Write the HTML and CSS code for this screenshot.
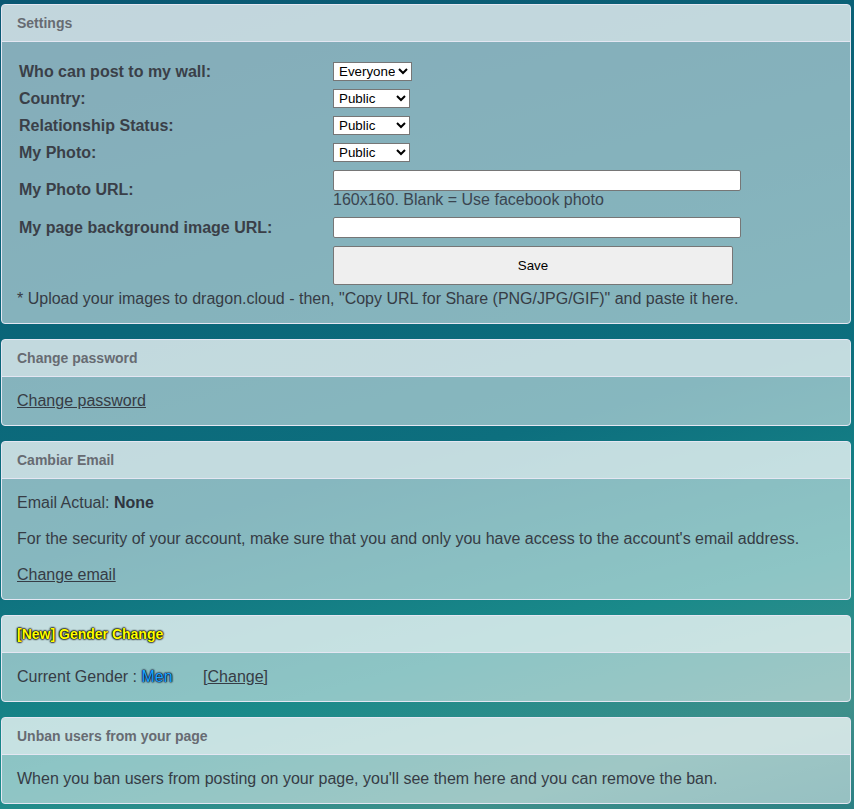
FILE: index.html
```html
<!DOCTYPE html>
<html lang="en">
<head>
    <meta charset="UTF-8">
    <meta name="viewport" content="width=device-width, initial-scale=1.0">
    <title>Settings</title>
    <link rel="stylesheet" href="styles.css">
</head>
<body>
    <div class="wrap">
        <div class="panel">
            <div class="panel-heading">Settings</div>
            <div class="panel-body">
                <table class="settings">
                    <tr>
                        <td class="label">Who can post to my wall:</td>
                        <td>
                            <select class="sel-wide">
                                <option>Everyone</option>
                                <option>Friends</option>
                                <option>Nobody</option>
                            </select>
                        </td>
                    </tr>
                    <tr>
                        <td class="label">Country:</td>
                        <td>
                            <select class="sel">
                                <option>Public</option>
                                <option>Private</option>
                            </select>
                        </td>
                    </tr>
                    <tr>
                        <td class="label">Relationship Status:</td>
                        <td>
                            <select class="sel">
                                <option>Public</option>
                                <option>Private</option>
                            </select>
                        </td>
                    </tr>
                    <tr>
                        <td class="label">My Photo:</td>
                        <td>
                            <select class="sel">
                                <option>Public</option>
                                <option>Private</option>
                            </select>
                        </td>
                    </tr>
                    <tr>
                        <td class="label">My Photo URL:</td>
                        <td>
                            <input type="text" class="url">
                            <div class="hint">160x160. Blank = Use facebook photo</div>
                        </td>
                    </tr>
                    <tr>
                        <td class="label">My page background image URL:</td>
                        <td><input type="text" class="url"></td>
                    </tr>
                    <tr>
                        <td></td>
                        <td><button class="save">Save</button></td>
                    </tr>
                </table>
                * Upload your images to dragon.cloud - then, "Copy URL for Share (PNG/JPG/GIF)" and paste it here.
            </div>
        </div>

        <div class="panel">
            <div class="panel-heading">Change password</div>
            <div class="panel-body">
                <a href="#">Change password</a>
            </div>
        </div>

        <div class="panel">
            <div class="panel-heading">Cambiar Email</div>
            <div class="panel-body">
                <p>Email Actual: <b>None</b></p>
                <p>For the security of your account, make sure that you and only you have access to the account's email address.</p>
                <a href="#">Change email</a>
            </div>
        </div>

        <div class="panel">
            <div class="panel-heading"><span class="new">[New] Gender Change</span></div>
            <div class="panel-body">
                Current Gender : <span class="gender">Men</span>
                <span class="change">[<a href="#">Change</a>]</span>
            </div>
        </div>

        <div class="panel">
            <div class="panel-heading">Unban users from your page</div>
            <div class="panel-body">
                When you ban users from posting on your page, you'll see them here and you can remove the ban.
            </div>
        </div>
    </div>
</body>
</html>
```

FILE: styles.css
```css
* {
    box-sizing: border-box;
}

html, body {
    margin: 0;
    min-height: 100%;
}

body {
    font-family: 'Liberation Sans', Arial, sans-serif;
    font-size: 16px;
    line-height: 18px;
    color: #363c45;
    background: linear-gradient(165deg, #0a5873 0%, #0b6679 35%, #0d6f7e 55%, #1a8a8a 75%, #3f8f8b 90%, #2c8084 100%);
    background-attachment: fixed;
}

.wrap {
    padding: 4px 3px 0 1px;
}

.panel {
    background-color: rgba(255, 255, 255, 0.5);
    border: 1px solid #e4e6f2;
    border-radius: 4px;
    margin-bottom: 15px;
}

.panel-heading {
    background-color: rgba(255, 255, 255, 0.5);
    border-bottom: 1px solid #e4e6f2;
    border-radius: 3px 3px 0 0;
    padding: 10px 15px;
    font-size: 14px;
    line-height: 16px;
    font-weight: bold;
    color: #676b72;
}

.panel-body {
    padding: 15px;
}

.panel-body p {
    margin: 0 0 18px;
}

.panel-body b {
    color: #2f3540;
}

a {
    color: #363c45;
    text-decoration: underline;
}

/* settings form */
.settings {
    border-spacing: 2px;
    margin-left: -1px;
}

.settings td {
    padding: 3px 1px;
    vertical-align: middle;
}

.settings .label {
    width: 312px;
    font-weight: bold;
    color: #3a3f48;
}

.settings select {
    font-family: 'Liberation Sans', Arial, sans-serif;
    font-size: 13.33px;
    height: 19px;
    padding: 0 0 0 1px;
    border: 1px solid #767676;
    border-radius: 0;
    background: #fff;
    color: #000;
}

.sel-wide {
    width: 79px;
}

.sel {
    width: 77px;
}

.url {
    display: block;
    width: 408px;
    height: 21px;
    border: 1px solid #767676;
    border-radius: 2px;
    background: #fff;
    padding: 1px 2px;
}

.hint {
    color: #3a4550;
}

.save {
    display: block;
    width: 400px;
    height: 39px;
    background: #efefef;
    border: 1px solid #767676;
    border-radius: 2px;
    font-family: 'Liberation Sans', Arial, sans-serif;
    font-size: 13.33px;
    color: #000;
}

/* gender panel */
.new {
    color: #ffff00;
    text-shadow: 0 0 2px #000, 0 0 2px #000, 0 0 2px #000, 0 0 1px #000;
}

.gender {
    color: #1ea7ff;
    text-shadow: 0 0 2px #002, 0 0 2px #002, 0 0 1px #002;
}

.change {
    margin-left: 26px;
}
```
